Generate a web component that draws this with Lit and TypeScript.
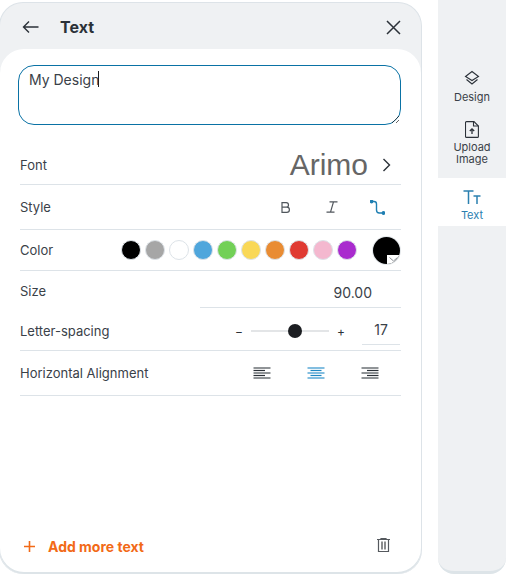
import { LitElement, html, css, svg } from "lit";
import { customElement } from "lit/decorators.js";

const COLORS = ["#000000", "#a6a6a6", "#ffffff", "#4fa6dc", "#72d057", "#f9d857", "#e98c33", "#e03a32", "#f4b8cf", "#a92bce"];

const alignIcon = (shortFrom: number, shortTo: number, long: string, short: string) => html`
  <svg width="18" height="12" viewBox="0 0 18 12" fill="none">
    ${[1, 3.5, 6, 8.5, 11].map((y, i) =>
      i % 2 === 0
        ? svg`<line x1="0.5" x2="17.5" y1=${y} y2=${y} stroke=${long} stroke-width="1.5"></line>`
        : svg`<line x1=${shortFrom} x2=${shortTo} y1=${y} y2=${y} stroke=${short} stroke-width="1.2"></line>`
    )}
  </svg>`;

@customElement("app-root")
export class AppRoot extends LitElement {
  static styles = css`
    :host { display: block; width: 511px; height: 574px; background: #fff; font-family: Inter, "Liberation Sans", sans-serif; color: #3a4148; overflow: hidden; }
    * { box-sizing: border-box; }
    .page { display: flex; height: 574px; align-items: stretch; }
    .panel { width: 423px; margin: 2px 0 0 -1px; height: 572px; background: #eff1f3; border: 1px solid #dde3e8; border-bottom: 0; border-radius: 24px; display: flex; flex-direction: column; }
    .head { height: 46px; flex: none; display: flex; align-items: center; padding: 2px 20px 0 22px; }
    .head h1 { margin: 0 0 0 20px; font-size: 16px; font-weight: 700; color: #2b3138; flex: 1; line-height: 20px; }
    .body { flex: 1; background: #fff; border-radius: 24px; margin-bottom: 2px; padding: 16px 20px 0 20px; display: flex; flex-direction: column; box-shadow: 0 2px 0 #dde4e8; }
    .field { position: relative; width: 383px; height: 60px; margin-left: -2px; flex: none; }
    textarea { display: block; width: 383px; height: 60px; margin: 0; border: 1px solid #0a72a5; border-radius: 16px; outline: none; padding: 5px 10px; font: 14px/18px Inter, "Liberation Sans", sans-serif; color: #3a4148; resize: vertical; caret-color: transparent; }
    .caret { position: absolute; left: 80px; top: 6px; width: 1px; height: 16px; background: #1a1d20; pointer-events: none; }
    .row { display: flex; align-items: center; border-bottom: 1px solid #dde3e8; font-size: 13px; width: 381px; flex: none; }
    .label { flex: 1; color: #3a4148; }
    .font { height: 60px; padding-top: 20px; padding-right: 10px; }
    .font .name { font: 30px/32px "Liberation Sans", Arial, sans-serif; color: #666; margin-right: 14px; }
    .style { height: 45px; }
    .style .tools { display: flex; align-items: center; gap: 27px; margin-right: 14px; }
    .tool { width: 19px; height: 19px; display: flex; align-items: center; justify-content: center; }
    .color { height: 41px; }
    .swatches { display: flex; gap: 4px; margin-right: 16px; }
    .sw { width: 20px; height: 20px; border-radius: 50%; border: 1px solid #dde3e8; }
    .big { width: 27px; height: 27px; border-radius: 50%; background: #000; position: relative; overflow: hidden; margin-right: 1px; box-shadow: 0 0 0 1px #e4e8eb; }
    .big span { position: absolute; right: 0; bottom: 0; width: 13px; height: 9px; background: #fff; display: flex; align-items: center; justify-content: center; }
    .size { height: 37px; border-bottom: 0; align-items: stretch; }
    .size .label { align-self: center; margin-top: 2px; }
    .size .val { width: 201px; border-bottom: 1px solid #dde3e8; text-align: right; padding-right: 29px; line-height: 43px; font-size: 14px; color: #3a4148; }
    .spacing { height: 43px; padding-top: 4px; }
    .slider { display: flex; align-items: center; }
    .pm { font-size: 12px; width: 12px; text-align: center; color: #2b3138; }
    .track { width: 78px; height: 2px; background: #e3e5e7; margin: 0 6px; position: relative; }
    .thumb { position: absolute; left: 37px; top: -6px; width: 14px; height: 14px; border-radius: 50%; background: #1c1e22; }
    .num { width: 38px; height: 27px; margin: 1px 1px 0 15px; border-bottom: 1px solid #dde3e8; text-align: center; font-size: 14px; line-height: 24px; color: #3a4148; }
    .align { height: 45px; }
    .align .tools { display: flex; gap: 36px; margin-right: 22px; }
    .spacer { flex: 1; }
    .foot { flex: none; height: 54px; display: flex; align-items: center; padding: 2px 11px 0 4px; width: 381px; }
    .add { display: flex; align-items: center; gap: 13px; flex: 1; font-size: 14px; font-weight: 700; color: #f26a17; }
    .trash { margin-top: -2px; }
    .rail { width: 68px; margin-left: 16px; background: #eff1f3; border-radius: 0 0 16px 16px; border-bottom: 3px solid #dde4e8; display: flex; flex-direction: column; padding-top: 70px; }
    .item { display: flex; flex-direction: column; align-items: center; font-size: 11px; line-height: 12px; color: #3a4148; text-align: center; flex: none; }
    .item svg { display: block; }
    .d { height: 43px; gap: 5px; }
    .u { height: 65px; gap: 3px; padding-top: 8px; }
    .t { height: 48px; background: #fff; color: #2b80b0; padding-top: 12px; gap: 5px; }
  `;

  render() {
    return html`
      <div class="page">
        <section class="panel">
          <header class="head">
            <svg width="18" height="14" viewBox="0 0 18 14" fill="none" stroke="#2b3138" stroke-width="1.4"><path d="M16.500 7H1.500M7 1.500 1.500 7 7 12.500"/></svg>
            <h1>Text</h1>
            <svg width="15" height="15" viewBox="0 0 15 15" fill="none" stroke="#2b3138" stroke-width="1.5"><path d="M1 1l13 13M14 1 1 14"/></svg>
          </header>
          <div class="body">
            <div class="field">
              <textarea .value=${"My Design"}></textarea>
              <span class="caret"></span>
            </div>
            <div class="row font">
              <span class="label">Font</span>
              <span class="name">Arimo</span>
              <svg width="9" height="14" viewBox="0 0 9 14" fill="none" stroke="#2b3138" stroke-width="1.4"><path d="M1.500 1 7.500 7 1.500 13"/></svg>
            </div>
            <div class="row style">
              <span class="label">Style</span>
              <div class="tools">
                <span class="tool"><svg width="9" height="11" viewBox="0 0 9 11" fill="none" stroke="#50565c" stroke-width="1.2"><path d="M1 .6h4.200a2.300 2.300 0 0 1 0 4.600H1zM1 5.200h4.800a2.600 2.600 0 0 1 0 5.200H1z"/></svg></span>
                <span class="tool"><svg width="12" height="12" viewBox="0 0 12 12" fill="none" stroke="#50565c" stroke-width="1.2"><path d="M3.500.8H11.500M.5 11.200H8.500M7.500.8 4.500 11.200"/></svg></span>
                <span class="tool"><svg width="15" height="15" viewBox="0 0 15 15" fill="none" stroke="#1f7fb2" stroke-width="1.4"><path d="M1.500 1.500h2.500c1.500 0 2.500 1 2.500 2.500v6c0 1.700 1 3 2.800 3h4"/><circle cx="1.500" cy="1.500" r="1.200" fill="#1f7fb2"/><circle cx="13.500" cy="13" r="1.200" fill="#1f7fb2"/></svg></span>
              </div>
            </div>
            <div class="row color">
              <span class="label">Color</span>
              <div class="swatches">
                ${COLORS.map((c) => html`<span class="sw" style="background:${c}"></span>`)}
              </div>
              <div class="big"><span><svg width="9" height="5" viewBox="0 0 9 5" fill="none" stroke="#8a8f94" stroke-width="1"><path d="M.5.5 4.500 4 8.500.5"/></svg></span></div>
            </div>
            <div class="row size">
              <span class="label">Size</span>
              <div class="val">90.00</div>
            </div>
            <div class="row spacing">
              <span class="label">Letter-spacing</span>
              <div class="slider">
                <span class="pm">−</span>
                <div class="track"><div class="thumb"></div></div>
                <span class="pm">+</span>
              </div>
              <div class="num">17</div>
            </div>
            <div class="row align">
              <span class="label">Horizontal Alignment</span>
              <div class="tools">
                ${alignIcon(0.5, 12, "#6b7075", "#2b3138")}
                ${alignIcon(3.5, 14.5, "#5aa9d6", "#1f88c2")}
                ${alignIcon(6, 17.5, "#6b7075", "#2b3138")}
              </div>
            </div>
            <div class="spacer"></div>
            <div class="foot">
              <div class="add">
                <svg width="11" height="11" viewBox="0 0 11 11" fill="none" stroke="#f26a17" stroke-width="1.6"><path d="M5.500 0v11M0 5.500h11"/></svg>
                <span>Add more text</span>
              </div>
              <svg class="trash" width="13" height="14" viewBox="0 0 13 14" fill="none"><path d="M0 1.500h13M4 1.500V.5h5v1M1.500 1.500v12h10v-12" stroke="#55595e" stroke-width="1.200"/><path d="M5 3.500v8M8 3.500v8" stroke="#16181b" stroke-width="1"/></svg>
            </div>
          </div>
        </section>
        <nav class="rail">
          <div class="item d">
            <svg width="16" height="16" viewBox="0 0 16 16" fill="none" stroke="#2b3138" stroke-width="1.1"><path d="M8 1.500 14.500 6.500 8 10.500 1.500 6.500z"/><path d="M2.500 9.500 8 14l5.500-4.500"/></svg>
            <span>Design</span>
          </div>
          <div class="item u">
            <svg width="14" height="17" viewBox="0 0 14 17" fill="none" stroke="#2b3138" stroke-width="1.1"><path d="M1.500.6h7.500l4.400 4.400v10.400a1 1 0 0 1-1 1H1.500a1 1 0 0 1-1-1V1.600a1 1 0 0 1 1-1z"/><path d="M8.500.6v4.400h4.900"/><path d="M7 13V8M4.800 10 7 7.800 9.200 10" stroke-width="1.300"/></svg>
            <span>Upload<br />Image</span>
          </div>
          <div class="item t">
            <svg width="18" height="14" viewBox="0 0 18 14" fill="none" stroke="#2b80b0" stroke-width="1.5"><path d="M.5 1h10M5.500 1v13M10.500 6h7M14 6v8"/></svg>
            <span>Text</span>
          </div>
        </nav>
      </div>
    `;
  }
}
